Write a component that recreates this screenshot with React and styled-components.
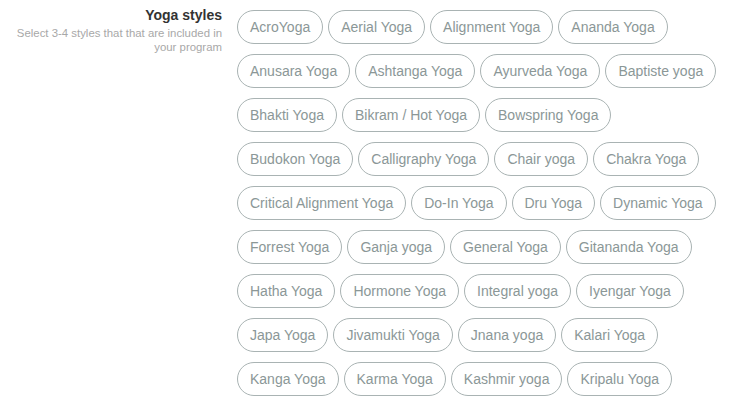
import React from "react";
import styled, { createGlobalStyle } from "styled-components";

const Global = createGlobalStyle`
  html, body { margin: 0; padding: 0; background: #fff; }
  body { font-family: "Liberation Sans", Arial, Helvetica, sans-serif; }
`;

const Page = styled.div`
  display: flex;
  align-items: flex-start;
  padding: 7px 17px 0 0;
`;

const Label = styled.div`
  width: 222px;
  flex: none;
  text-align: right;
`;

const Title = styled.div`
  font-size: 14px;
  line-height: 16px;
  font-weight: 700;
  color: #333;
`;

const Hint = styled.div`
  margin-top: 3px;
  font-size: 11.4px;
  line-height: 14px;
  color: #a8a8a8;
`;

const Chips = styled.div`
  flex: 1;
  margin-left: 15px;
  margin-top: 3px;
  display: flex;
  flex-wrap: wrap;
  gap: 10px 5px;
`;

const Chip = styled.button`
  font-family: inherit;
  font-size: 14px;
  line-height: 16px;
  padding: 8px 12px;
  border: 1px solid #a9b3b3;
  border-radius: 17px;
  background: #fff;
  color: #8b9797;
  cursor: pointer;
  white-space: nowrap;
`;

const styles = [
  "AcroYoga", "Aerial Yoga", "Alignment Yoga", "Ananda Yoga",
  "Anusara Yoga", "Ashtanga Yoga", "Ayurveda Yoga", "Baptiste yoga",
  "Bhakti Yoga", "Bikram / Hot Yoga", "Bowspring Yoga",
  "Budokon Yoga", "Calligraphy Yoga", "Chair yoga", "Chakra Yoga",
  "Critical Alignment Yoga", "Do-In Yoga", "Dru Yoga", "Dynamic Yoga",
  "Forrest Yoga", "Ganja yoga", "General Yoga", "Gitananda Yoga",
  "Hatha Yoga", "Hormone Yoga", "Integral yoga", "Iyengar Yoga",
  "Japa Yoga", "Jivamukti Yoga", "Jnana yoga", "Kalari Yoga",
  "Kanga Yoga", "Karma Yoga", "Kashmir yoga", "Kripalu Yoga",
];

export default function App() {
  return (
    <>
      <Global />
      <Page>
        <Label>
          <Title>Yoga styles</Title>
          <Hint>Select 3-4 styles that that are included in your program</Hint>
        </Label>
        <Chips>
          {styles.map((s) => (
            <Chip key={s}>{s}</Chip>
          ))}
        </Chips>
      </Page>
    </>
  );
}
